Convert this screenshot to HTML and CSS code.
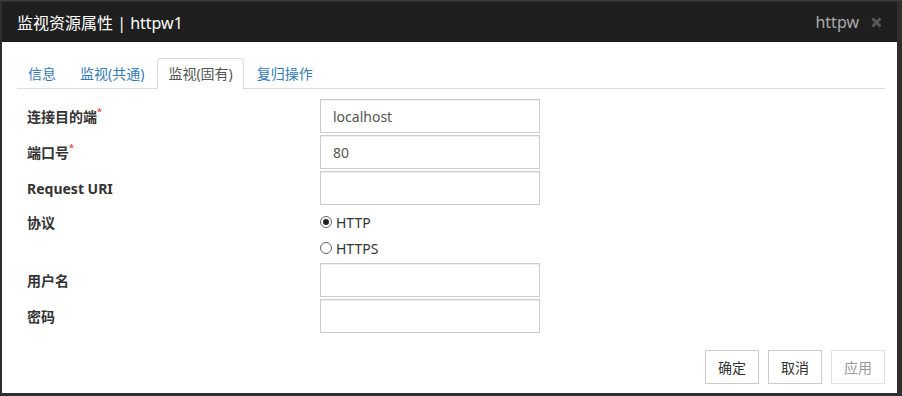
FILE: index.html
```html
<!DOCTYPE html>
<html lang="zh-CN">
  <head>
    <meta charset="UTF-8" />
    <title>监视资源属性 | httpw1</title>
    <link rel="stylesheet" href="styles.css">
  </head>
  <body>
    <div class="dialog">
      <div class="dialog-header">
        <span class="dialog-title">监视资源属性 | httpw1</span>
        <span class="dialog-sub">httpw</span>
        <svg class="dialog-close" width="11" height="11" viewBox="0 0 11 11">
          <path d="M1.5 1.5 L9.5 9.5 M9.5 1.5 L1.5 9.5" stroke="#5a5a5a" stroke-width="2.6" />
        </svg>
      </div>

      <div class="dialog-body">
        <ul class="tabs">
          <li class="tab">信息</li>
          <li class="tab">监视(共通)</li>
          <li class="tab active">监视(固有)</li>
          <li class="tab">复归操作</li>
        </ul>

        <div class="form">
          <label class="form-label">连接目的端<sup class="req">*</sup></label>
          <input class="form-input" type="text" value="localhost" />

          <label class="form-label">端口号<sup class="req">*</sup></label>
          <input class="form-input" type="text" value="80" />

          <label class="form-label">Request URI</label>
          <input class="form-input" type="text" value="" />

          <label class="form-label label-top">协议</label>
          <div class="radio-group">
            <label class="radio"><span class="radio-dot checked"></span>HTTP</label>
            <label class="radio"><span class="radio-dot"></span>HTTPS</label>
          </div>

          <label class="form-label">用户名</label>
          <input class="form-input" type="text" value="" />

          <label class="form-label">密码</label>
          <input class="form-input" type="password" value="" />
        </div>

        <div class="dialog-footer">
          <button class="btn">确定</button>
          <button class="btn">取消</button>
          <button class="btn disabled">应用</button>
        </div>
      </div>
    </div>
  </body>
</html>
```

FILE: styles.css
```css
html,
body {
  margin: 0;
  height: 100%;
}

body {
  font-family: "Noto Sans", "Noto Sans CJK SC", sans-serif;
  background: #2e2e2e;
  overflow: hidden;
  border-top: 1px solid #3a3a3a;
  box-sizing: border-box;
}

.dialog {
  margin: 1px 0 0 2px;
  width: 895px;
  height: 391px;
  background: #fff;
  display: flex;
  flex-direction: column;
}

.dialog-header {
  height: 40px;
  background: #1f1f1f;
  display: flex;
  align-items: center;
  padding: 0 15px;
  flex-shrink: 0;
}

.dialog-title {
  color: #fff;
  font-size: 16px;
  flex: 1;
}

.dialog-sub {
  color: #aaa;
  font-size: 16px;
  margin-right: 12px;
}

.dialog-close {
  display: block;
}

.dialog-body {
  flex: 1;
  display: flex;
  flex-direction: column;
  padding: 16px 12px 9px 15px;
}

.tabs {
  list-style: none;
  margin: 0;
  padding: 0;
  display: flex;
  border-bottom: 1px solid #ddd;
  height: 30px;
}

.tab {
  padding: 0 10px;
  margin-right: 2px;
  line-height: 29px;
  font-size: 14px;
  color: #337ab7;
  border: 1px solid transparent;
  border-radius: 4px 4px 0 0;
}

.tab.active {
  color: #555;
  background: #fff;
  border-color: #ddd;
  border-bottom-color: #fff;
  height: 30px;
}

.form {
  display: grid;
  grid-template-columns: 293px 220px;
  grid-auto-rows: auto;
  row-gap: 2px;
  margin: 10px 0 0 10px;
  align-items: center;
}

.form-label {
  font-size: 14px;
  font-weight: bold;
  color: #333;
}

.label-top {
  align-self: start;
  padding-top: 5px;
}

.req {
  color: #d9534f;
  font-size: 9px;
  vertical-align: top;
  position: relative;
  top: -1px;
}

.form-input {
  box-sizing: border-box;
  width: 220px;
  height: 34px;
  border: 1px solid #ccc;
  box-shadow: inset 0 1px 1px rgba(0, 0, 0, 0.075);
  padding: 0 12px;
  font-family: "Noto Sans", "Noto Sans CJK SC", sans-serif;
  font-size: 14px;
  color: #555;
  outline: none;
}

.radio-group {
  display: flex;
  flex-direction: column;
  padding-top: 2px;
}

.radio {
  display: flex;
  align-items: center;
  height: 26px;
  font-size: 14px;
  color: #333;
}

.radio-dot {
  box-sizing: border-box;
  width: 12px;
  height: 12px;
  border: 1px solid #666;
  border-radius: 50%;
  margin-right: 4px;
  position: relative;
}

.radio-dot.checked::after {
  content: "";
  position: absolute;
  left: 2px;
  top: 2px;
  width: 6px;
  height: 6px;
  border-radius: 50%;
  background: #222;
}

.dialog-footer {
  margin-top: auto;
  display: flex;
  justify-content: flex-end;
  gap: 9px;
}

.btn {
  width: 54px;
  height: 34px;
  background: #fff;
  border: 1px solid #ccc;
  font-family: "Noto Sans", "Noto Sans CJK SC", sans-serif;
  font-size: 14px;
  color: #333;
  padding: 0;
}

.btn.disabled {
  border-color: #e3e3e3;
  color: #999;
}
```
